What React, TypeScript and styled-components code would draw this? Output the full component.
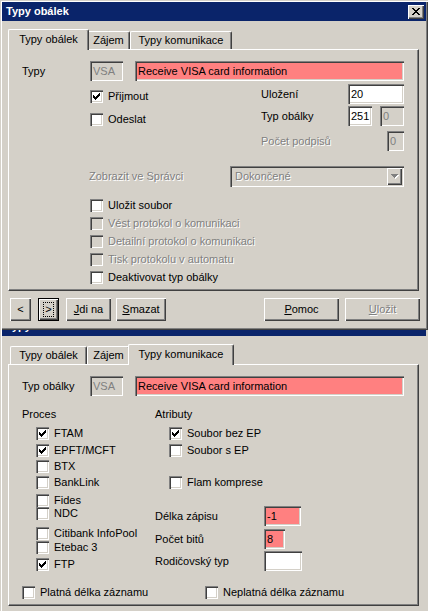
import React from 'react';
import styled, { createGlobalStyle, css } from 'styled-components';

const FACE = '#d4d0c8';
const SHADOW = '#808080';
const DARK = '#404040';
const TITLE = '#0a246a';
const PINK = '#ff8080';

const GlobalStyle = createGlobalStyle`
  * {
    box-sizing: border-box;
  }

  html,
  body {
    margin: 0;
    padding: 0;
    background: ${FACE};
  }

  body {
    width: 428px;
    height: 611px;
    overflow: hidden;
    font-family: 'Liberation Sans', Arial, sans-serif;
    font-size: 11px;
    line-height: 13px;
    color: #000;
  }
`;

const Screen = styled.div`
  display: flex;
  flex-direction: column;
  width: 428px;
  height: 611px;
`;

const Window = styled.div<{ $h: number; $cropped?: boolean }>`
  display: flex;
  flex-direction: column;
  flex: none;
  width: 428px;
  height: ${(p) => p.$h}px;
  background: ${FACE};
  padding: ${(p) => (p.$cropped ? '0 2px 0 2px' : '2px')};
  box-shadow: ${(p) =>
    p.$cropped
      ? `inset 1px 0 ${FACE}, inset 2px 0 #fff`
      : `inset 1px 1px ${FACE}, inset 2px 2px #fff, inset -1px -1px ${DARK}, inset -2px -2px ${SHADOW}`};
`;

const TitleBar = styled.div`
  display: flex;
  align-items: center;
  justify-content: space-between;
  height: 19px;
  padding: 0 2px 0 4px;
  background: ${TITLE};
  color: #fff;
  font-weight: bold;
`;

// the second screenshot starts inside its title bar: only the descenders show
const TitleStrip = styled.div`
  flex: none;
  height: 6px;
  overflow: hidden;
  background: ${TITLE};
  color: #fff;
  font-weight: bold;
  padding-left: 4px;

  span {
    display: block;
    margin-top: -10px;
  }
`;

const CloseButton = styled.div`
  display: flex;
  align-items: center;
  justify-content: center;
  width: 16px;
  height: 14px;
  padding: 0 1px 1px 0;
  background: ${FACE};
  box-shadow: inset 1px 1px #fff, inset -1px -1px ${DARK}, inset -2px -2px ${SHADOW};
`;

const Body = styled.div`
  display: flex;
  flex-direction: column;
  padding: 8px 7px 0 6px;
`;

const TabStrip = styled.div`
  display: flex;
  align-items: flex-end;
  height: 20px;
  padding-left: 2px;
`;

const Tab = styled.div<{ $w: number; $active?: boolean }>`
  position: relative;
  z-index: ${(p) => (p.$active ? 2 : 1)};
  display: flex;
  align-items: center;
  justify-content: center;
  width: ${(p) => p.$w + (p.$active ? 4 : 0)}px;
  height: ${(p) => (p.$active ? 21 : 18)}px;
  margin: 0 ${(p) => (p.$active ? -2 : 0)}px ${(p) => (p.$active ? -1 : 0)}px;
  padding-bottom: ${(p) => (p.$active ? 2 : 0)}px;
  background: ${FACE};
  border-top: 1px solid #fff;
  border-left: 1px solid #fff;
  border-right: 1px solid ${DARK};
  border-radius: 2px 2px 0 0;
  box-shadow: inset -1px 0 ${SHADOW};
  white-space: nowrap;
`;

const Panel = styled.div`
  display: flex;
  flex-direction: column;
  width: 411px;
  height: 242px;
  padding: 11px 0 0 13px;
  border-top: 1px solid #fff;
  border-left: 1px solid #fff;
  border-right: 1px solid ${DARK};
  border-bottom: 1px solid ${DARK};
  box-shadow: inset -1px -1px ${SHADOW};
`;

const Row = styled.div<{ $mt?: number; $top?: boolean }>`
  display: flex;
  align-items: ${(p) => (p.$top ? 'flex-start' : 'center')};
  margin-top: ${(p) => p.$mt ?? 0}px;
`;

const Column = styled.div<{ $w?: number; $ml?: number; $mt?: number; $pt?: number; $gap?: number }>`
  display: flex;
  flex-direction: column;
  width: ${(p) => (p.$w ? `${p.$w}px` : 'auto')};
  margin-left: ${(p) => p.$ml ?? 0}px;
  margin-top: ${(p) => p.$mt ?? 0}px;
  padding-top: ${(p) => p.$pt ?? 0}px;
  gap: ${(p) => p.$gap ?? 0}px;
`;

const PairRow = styled.div<{ $mt?: number; $w?: number }>`
  display: flex;
  align-items: center;
  justify-content: space-between;
  width: ${(p) => (p.$w ? `${p.$w}px` : 'auto')};
  margin-top: ${(p) => p.$mt ?? 0}px;
`;

const Label = styled.span<{ $w?: number; $ml?: number; $disabled?: boolean }>`
  display: block;
  flex: none;
  width: ${(p) => (p.$w ? `${p.$w}px` : 'auto')};
  margin-left: ${(p) => p.$ml ?? 0}px;
  white-space: nowrap;
  color: ${(p) => (p.$disabled ? SHADOW : '#000')};
  text-shadow: ${(p) => (p.$disabled ? '1px 1px #fff' : 'none')};
`;

const sunken = css`
  box-shadow: inset 1px 1px ${SHADOW}, inset 2px 2px ${DARK}, inset -1px -1px #fff,
    inset -2px -2px ${FACE};
`;

const toneBg = { white: '#fff', pink: PINK, face: FACE };

const Field = styled.div<{ $w: number; $tone?: 'white' | 'pink' | 'face'; $ml?: number }>`
  display: flex;
  align-items: center;
  flex: none;
  width: ${(p) => p.$w}px;
  height: 20px;
  margin-left: ${(p) => p.$ml ?? 0}px;
  padding: 2px 3px;
  overflow: hidden;
  white-space: nowrap;
  background: ${(p) => toneBg[p.$tone ?? 'white']};
  color: ${(p) => (p.$tone === 'face' ? SHADOW : '#000')};
  ${sunken}
`;

const Combo = styled.div`
  display: flex;
  align-items: center;
  justify-content: space-between;
  width: 174px;
  height: 21px;
  padding: 2px 2px 2px 5px;
  background: ${FACE};
  color: ${SHADOW};
  text-shadow: 1px 1px #fff;
  ${sunken}
`;

const ComboButton = styled.div`
  display: flex;
  align-items: center;
  justify-content: center;
  width: 15px;
  height: 17px;
  background: ${FACE};
  box-shadow: inset 1px 1px #fff, inset -1px -1px ${DARK}, inset -2px -2px ${SHADOW};
`;

const CheckRow = styled.div<{ $mt?: number; $w?: number; $disabled?: boolean }>`
  display: flex;
  align-items: center;
  gap: 5px;
  flex: none;
  width: ${(p) => (p.$w ? `${p.$w}px` : 'auto')};
  height: 13px;
  margin-top: ${(p) => p.$mt ?? 0}px;
  white-space: nowrap;
  color: ${(p) => (p.$disabled ? SHADOW : '#000')};
  text-shadow: ${(p) => (p.$disabled ? '1px 1px #fff' : 'none')};
`;

const CheckBox = styled.span<{ $disabled?: boolean }>`
  display: flex;
  align-items: center;
  justify-content: center;
  flex: none;
  width: 13px;
  height: 13px;
  background: ${(p) => (p.$disabled ? FACE : '#fff')};
  ${sunken}
`;

const ButtonBar = styled.div`
  display: flex;
  justify-content: space-between;
  margin: 7px -1px 0 2px;
`;

const ButtonGroup = styled.div`
  display: flex;
`;

const Button = styled.div<{ $w: number; $ml?: number; $focus?: boolean; $disabled?: boolean }>`
  position: relative;
  display: flex;
  align-items: center;
  justify-content: center;
  width: ${(p) => p.$w}px;
  height: 23px;
  margin-left: ${(p) => p.$ml ?? 0}px;
  background: ${FACE};
  color: ${(p) => (p.$disabled ? SHADOW : '#000')};
  text-shadow: ${(p) => (p.$disabled ? '1px 1px #fff' : 'none')};
  box-shadow: ${(p) =>
    p.$focus
      ? `inset 1px 1px #000, inset -1px -1px #000, inset 2px 2px #fff, inset -2px -2px ${DARK}, inset -3px -3px ${SHADOW}`
      : `inset 1px 1px #fff, inset -1px -1px ${DARK}, inset -2px -2px ${SHADOW}`};

  ${(p) =>
    p.$focus &&
    css`
      &::after {
        content: '';
        position: absolute;
        inset: 4px 5px;
        border: 1px dotted #000;
      }
    `}
`;

const CHECK = ['......#', '.....##', '#...###', '##.###.', '#####..', '.###...', '..#....'];
const CROSS = ['##....##', '.##..##.', '..####..', '...##...', '..####..', '.##..##.', '##....##'];
const ARROW = ['#######', '.#####.', '..###..', '...#...'];

function Pixels({ map, color, shade }: { map: string[]; color: string; shade?: string }) {
  const w = map[0].length + (shade ? 1 : 0);
  const h = map.length + (shade ? 1 : 0);
  const cells = (fill: string, d: number) =>
    map.flatMap((row, y) =>
      [...row].map((c, x) =>
        c === '#' ? <rect key={`${fill}${x}-${y}`} x={x + d} y={y + d} width="1" height="1" fill={fill} /> : null,
      ),
    );
  return (
    <svg width={w} height={h} viewBox={`0 0 ${w} ${h}`} shapeRendering="crispEdges">
      {shade && cells(shade, 1)}
      {cells(color, 0)}
    </svg>
  );
}

function Check({
  label,
  checked,
  disabled,
  mt,
  w,
}: {
  label: string;
  checked?: boolean;
  disabled?: boolean;
  mt?: number;
  w?: number;
}) {
  return (
    <CheckRow $mt={mt} $w={w} $disabled={disabled}>
      <CheckBox $disabled={disabled}>{checked && <Pixels map={CHECK} color="#000" />}</CheckBox>
      <span>{label}</span>
    </CheckRow>
  );
}

const tabs = [
  { label: 'Typy obálek', w: 77 },
  { label: 'Zájem', w: 43 },
  { label: 'Typy komunikace', w: 102 },
];

function Tabs({ active }: { active: number }) {
  return (
    <TabStrip>
      {tabs.map((t, i) => (
        <Tab key={t.label} $w={t.w} $active={i === active}>
          {t.label}
        </Tab>
      ))}
    </TabStrip>
  );
}

const procesy = [
  { label: 'FTAM', checked: true, mt: 0 },
  { label: 'EPFT/MCFT', checked: true, mt: 4 },
  { label: 'BTX', mt: 3 },
  { label: 'BankLink', mt: 3 },
  { label: 'Fides', mt: 5 },
  { label: 'NDC', mt: 0 },
  { label: 'Citibank InfoPool', mt: 7 },
  { label: 'Etebac 3', mt: 1 },
  { label: 'FTP', checked: true, mt: 4 },
];

export default function App() {
  return (
    <>
      <GlobalStyle />
      <Screen>
        <Window $h={330}>
          <TitleBar>
            <span>Typy obálek</span>
            <CloseButton>
              <Pixels map={CROSS} color="#000" />
            </CloseButton>
          </TitleBar>
          <Body>
            <Tabs active={0} />
            <Panel>
              <Row>
                <Label $w={68}>Typy</Label>
                <Field $w={33} $tone="face">VSA</Field>
                <Field $w={269} $tone="pink" $ml={12}>
                  Receive VISA card information
                </Field>
              </Row>
              <Row $mt={3} $top>
                <Column $ml={68} $w={171} $pt={6} $gap={10}>
                  <Check label="Přijmout" checked />
                  <Check label="Odeslat" />
                </Column>
                <Column>
                  <PairRow $w={143}>
                    <Label>Uložení</Label>
                    <Field $w={56}>20</Field>
                  </PairRow>
                  <PairRow $w={143} $mt={2}>
                    <Label>Typ obálky</Label>
                    <Row>
                      <Field $w={24}>251</Field>
                      <Field $w={24} $ml={8} $tone="face">
                        0
                      </Field>
                    </Row>
                  </PairRow>
                  <PairRow $w={143} $mt={5}>
                    <Label $disabled>Počet podpisů</Label>
                    <Field $w={17} $tone="face">
                      0
                    </Field>
                  </PairRow>
                </Column>
              </Row>
              <Row $mt={15}>
                <Label $w={141} $ml={67} $disabled>
                  Zobrazit ve Správci
                </Label>
                <Combo>
                  <span>Dokončené</span>
                  <ComboButton>
                    <Pixels map={ARROW} color={SHADOW} shade="#fff" />
                  </ComboButton>
                </Combo>
              </Row>
              <Column $ml={68} $mt={12} $gap={5}>
                <Check label="Uložit soubor" />
                <Check label="Vést protokol o komunikaci" disabled />
                <Check label="Detailní protokol o komunikaci" disabled />
                <Check label="Tisk protokolu v automatu" disabled />
                <Check label="Deaktivovat typ obálky" />
              </Column>
            </Panel>
            <ButtonBar>
              <ButtonGroup>
                <Button $w={21}>&lt;</Button>
                <Button $w={21} $ml={7} $focus>
                  &gt;
                </Button>
                <Button $w={45} $ml={7}>
                  <span>
                    <u>J</u>di na
                  </span>
                </Button>
                <Button $w={50} $ml={5}>
                  <span>
                    <u>S</u>mazat
                  </span>
                </Button>
              </ButtonGroup>
              <ButtonGroup>
                <Button $w={75}>
                  <span>
                    <u>P</u>omoc
                  </span>
                </Button>
                <Button $w={75} $ml={6} $disabled>
                  <span>
                    <u>U</u>ložit
                  </span>
                </Button>
              </ButtonGroup>
            </ButtonBar>
          </Body>
        </Window>

        <Window $h={281} $cropped>
          <TitleStrip aria-hidden="true">
            <span>Typy obálek</span>
          </TitleStrip>
          <Body>
            <Tabs active={2} />
            <Panel>
              <Row>
                <Label $w={68}>Typ obálky</Label>
                <Field $w={33} $tone="face">VSA</Field>
                <Field $w={269} $tone="pink" $ml={12}>
                  Receive VISA card information
                </Field>
              </Row>
              <Row $mt={12} $top>
                <Column $w={133}>
                  <Label>Proces</Label>
                  <Column $ml={14} $mt={6}>
                    {procesy.map((p) => (
                      <Check key={p.label} label={p.label} checked={p.checked} mt={p.mt} />
                    ))}
                  </Column>
                </Column>
                <Column>
                  <Label>Atributy</Label>
                  <Column $ml={14} $mt={6}>
                    <Check label="Soubor bez EP" checked />
                    <Check label="Soubor s EP" mt={4} />
                    <Check label="Flam komprese" mt={19} />
                  </Column>
                  <Row $mt={17}>
                    <Label $w={109}>Délka zápisu</Label>
                    <Field $w={37} $tone="pink">
                      -1
                    </Field>
                  </Row>
                  <Row $mt={3}>
                    <Label $w={109}>Počet bitů</Label>
                    <Field $w={21} $tone="pink">
                      8
                    </Field>
                  </Row>
                  <Row $mt={2}>
                    <Label $w={109}>Rodičovský typ</Label>
                    <Field $w={38} />
                  </Row>
                </Column>
              </Row>
              <Row $mt={15}>
                <Check label="Platná délka záznamu" w={183} />
                <Check label="Neplatná délka záznamu" />
              </Row>
            </Panel>
          </Body>
        </Window>
      </Screen>
    </>
  );
}
